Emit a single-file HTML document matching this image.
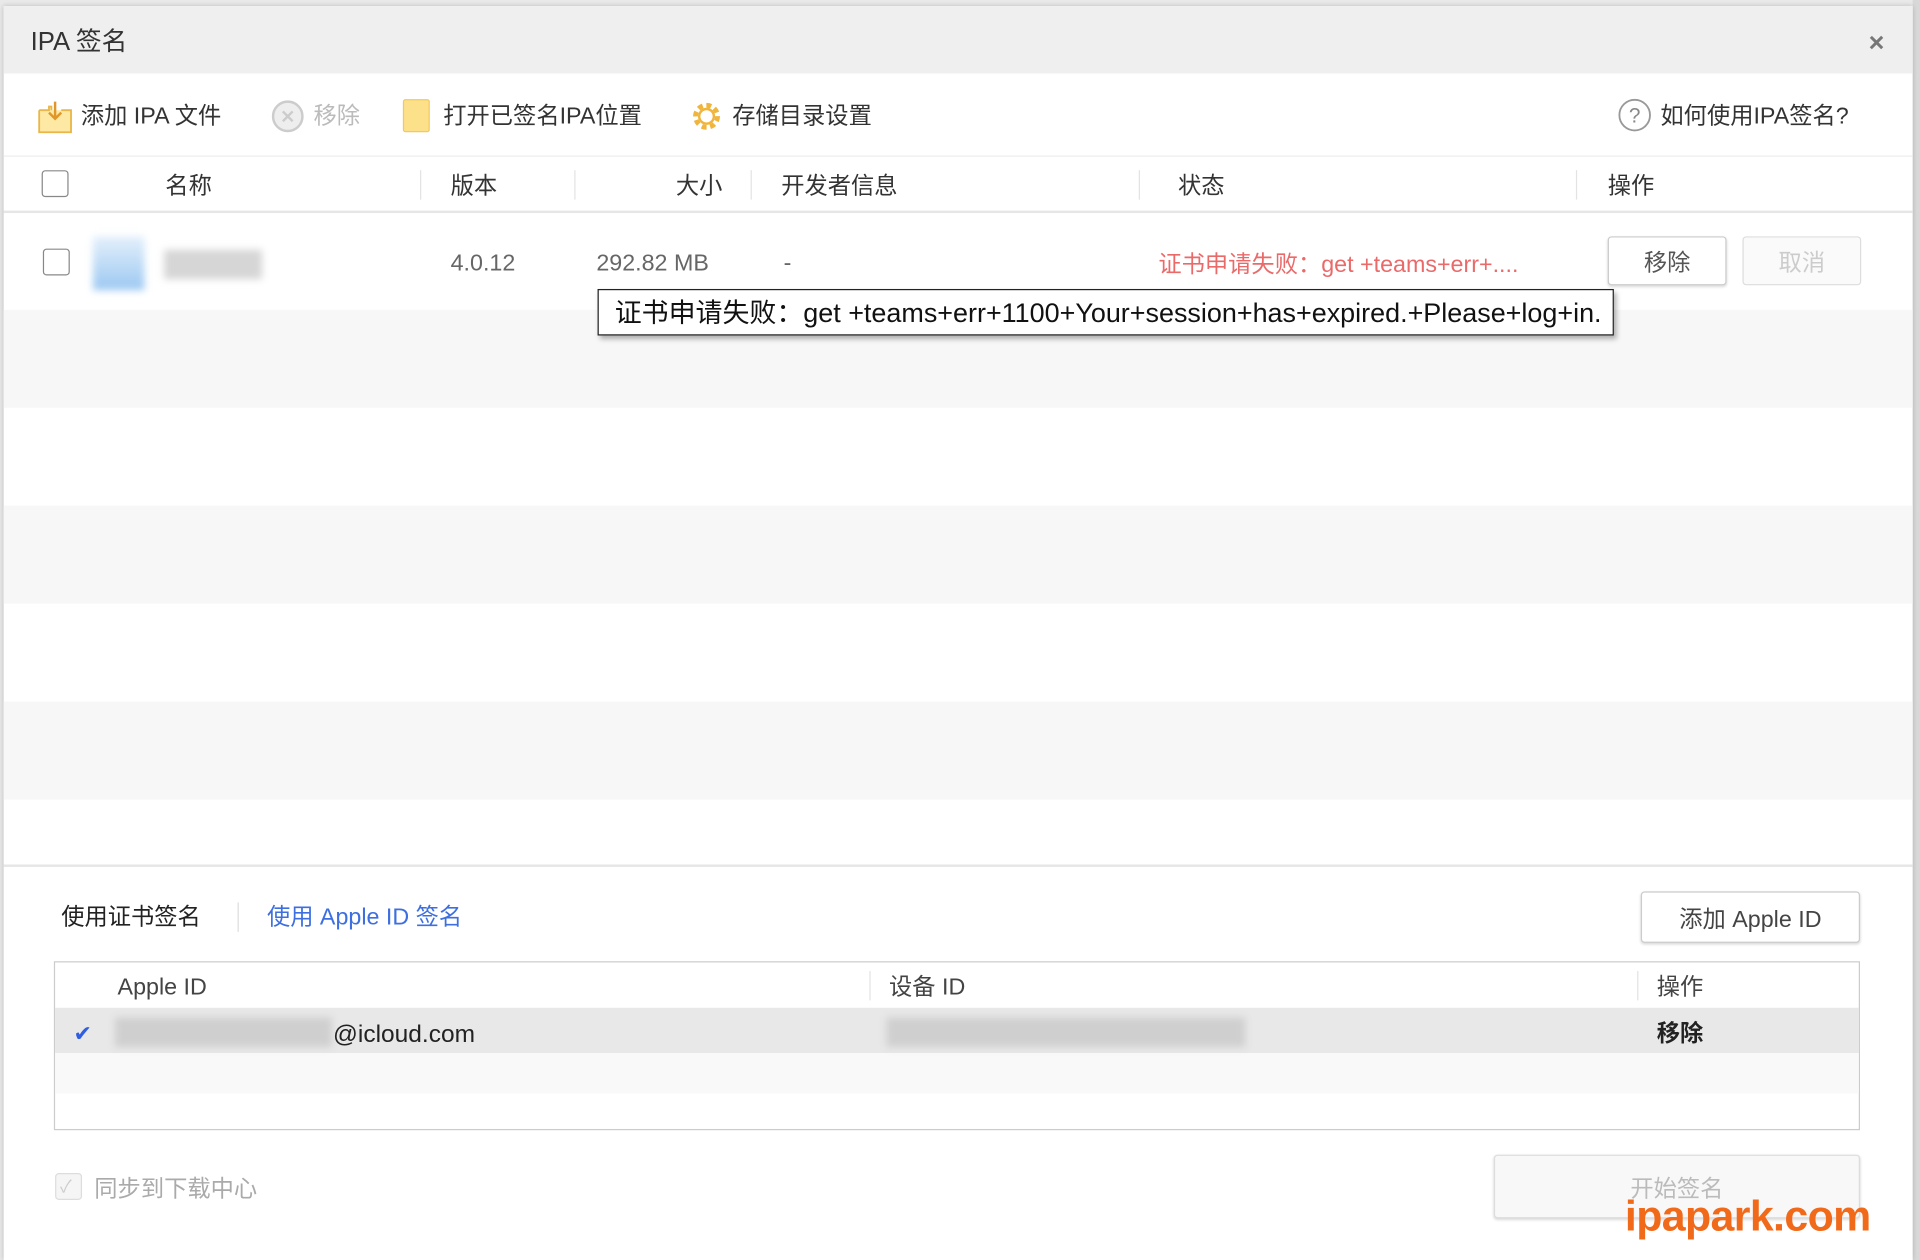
<!DOCTYPE html>
<html><head><meta charset="utf-8">
<style>
*{margin:0;padding:0;box-sizing:border-box}
html,body{width:1920px;height:1260px;overflow:hidden;background:#e9e9e9}
#w{position:absolute;left:0;top:0;width:1568px;height:1029px;transform:scale(1.22449);transform-origin:0 0;font-family:"Liberation Sans","Noto Sans CJK SC",sans-serif;color:#333}
.a{position:absolute}
.t{position:absolute;white-space:nowrap;line-height:1;margin-top:2px}
.dlg{left:3px;top:5px;width:1559px;height:1024px;background:#fff;box-shadow:0 0 4px rgba(0,0,0,.2)}
.cb{position:absolute;width:22px;height:22px;border:1.5px solid #888;border-radius:3px;background:#fff}
.sep{position:absolute;width:1px;background:#e3e3e3}
.btn{position:absolute;border:1px solid #ccc;border-radius:3px;background:#fff;box-shadow:0 1px 2px rgba(0,0,0,.15);display:flex;align-items:center;justify-content:center;font-size:19px}
</style></head><body><div id="w">
<div class="a" style="left:1562px;top:0;width:6px;height:1029px;background:#d8d8d8"></div>
<div class="a dlg"></div>
<div class="a" style="left:3px;top:5px;width:1559px;height:55px;background:#efefef"></div>
<div class="t" style="left:25px;top:22px;font-size:21px;color:#333">IPA 签名</div>
<div class="t" style="left:1526px;top:22px;font-size:22px;color:#777;font-weight:bold">×</div>

<svg class="a" style="left:30px;top:80px" width="30" height="30" viewBox="0 0 30 30"><path d="M2 10h8v-3h2v3M20 10h8v18H2V10" fill="#fde9a3" stroke="#e8b64a" stroke-width="1.5"/><path d="M15 3v14M10 12l5 5 5-5" fill="none" stroke="#e0962a" stroke-width="2"/></svg>
<div class="t" style="left:66px;top:84px;font-size:19px">添加 IPA 文件</div>
<svg class="a" style="left:221px;top:81px" width="28" height="28" viewBox="0 0 28 28"><circle cx="14" cy="14" r="12" fill="#eee" stroke="#ccc" stroke-width="2"/><path d="M10 10l8 8M18 10l-8 8" stroke="#ccc" stroke-width="2"/></svg>
<div class="t" style="left:256px;top:84px;font-size:19px;color:#bbb">移除</div>
<div class="a" style="left:329px;top:81px;width:22px;height:27px;background:#fde18a;border:1px solid #f2c95c;border-radius:2px"></div>
<div class="t" style="left:362px;top:84px;font-size:19px">打开已签名IPA位置</div>
<svg class="a" style="left:562px;top:80px" width="30" height="30" viewBox="0 0 30 30"><circle cx="15" cy="15" r="9" fill="none" stroke="#f0b53c" stroke-width="4" stroke-dasharray="4 3"/><circle cx="15" cy="15" r="6" fill="#fff" stroke="#f0b53c" stroke-width="2"/></svg>
<div class="t" style="left:598px;top:84px;font-size:19px">存储目录设置</div>
<svg class="a" style="left:1321px;top:80px" width="28" height="28" viewBox="0 0 28 28"><circle cx="14" cy="14" r="12.5" fill="none" stroke="#999" stroke-width="1.5"/><text x="14" y="20" font-size="17" text-anchor="middle" fill="#888" font-family="Liberation Sans">?</text></svg>
<div class="t" style="left:1356px;top:84px;font-size:19px">如何使用IPA签名?</div>

<div class="a" style="left:3px;top:127px;width:1559px;height:1px;background:#eee"></div>
<div class="a" style="left:3px;top:172px;width:1559px;height:2px;background:#e6e6e6"></div>
<div class="cb" style="left:34px;top:139px"></div>
<div class="t" style="left:135px;top:141px;font-size:19px">名称</div>
<div class="t" style="left:368px;top:141px;font-size:19px">版本</div>
<div class="t" style="left:552px;top:141px;font-size:19px">大小</div>
<div class="t" style="left:638px;top:141px;font-size:19px">开发者信息</div>
<div class="t" style="left:962px;top:141px;font-size:19px">状态</div>
<div class="t" style="left:1313px;top:141px;font-size:19px">操作</div>
<div class="sep" style="left:343px;top:139px;height:24px"></div>
<div class="sep" style="left:469px;top:139px;height:24px"></div>
<div class="sep" style="left:613px;top:139px;height:24px"></div>
<div class="sep" style="left:930px;top:139px;height:24px"></div>
<div class="sep" style="left:1287px;top:139px;height:24px"></div>

<div class="a" style="left:3px;top:253px;width:1559px;height:80px;background:#f7f7f7"></div>
<div class="a" style="left:3px;top:413px;width:1559px;height:80px;background:#f7f7f7"></div>
<div class="a" style="left:3px;top:573px;width:1559px;height:80px;background:#f7f7f7"></div>
<div class="a" style="left:3px;top:706px;width:1559px;height:2px;background:#e6e6e6"></div>
<div class="cb" style="left:35px;top:203px"></div>
<div class="a" style="left:76px;top:193px;width:42px;height:44px;background:linear-gradient(#e4f0fb,#9cc8f2);filter:blur(3px)"></div>
<div class="a" style="left:134px;top:204px;width:80px;height:24px;background:#d6d6d6;filter:blur(3px)"></div>
<div class="t" style="left:368px;top:204px;font-size:19px;color:#666">4.0.12</div>
<div class="t" style="left:487px;top:204px;font-size:19px;color:#666">292.82 MB</div>
<div class="t" style="left:640px;top:204px;font-size:19px;color:#666">-</div>
<div class="t" style="left:946px;top:205px;font-size:19px;color:#ea6a6a">证书申请失败：get +teams+err+....</div>
<div class="btn" style="left:1313px;top:193px;width:97px;height:40px;color:#555">移除</div>
<div class="btn" style="left:1423px;top:193px;width:97px;height:40px;color:#ccc;background:#fafafa;box-shadow:none;border-color:#ddd">取消</div>
<div class="a" style="left:488px;top:236px;width:830px;height:38px;background:#fff;border:1px solid #222;box-shadow:2px 3px 4px rgba(0,0,0,.3)"></div>
<div class="t" style="left:502px;top:243px;font-size:22px;color:#111">证书申请失败：get +teams+err+1100+Your+session+has+expired.+Please+log+in.</div>

<div class="t" style="left:50px;top:738px;font-size:19px;color:#222">使用证书签名</div>
<div class="sep" style="left:194px;top:737px;height:24px;background:#ddd"></div>
<div class="t" style="left:218px;top:738px;font-size:19px;color:#3d6fe0">使用 Apple ID 签名</div>
<div class="btn" style="left:1340px;top:728px;width:179px;height:42px;color:#444">添加 Apple ID</div>

<div class="a" style="left:44px;top:785px;width:1475px;height:138px;border:1.5px solid #ccc;background:#fff"></div>
<div class="t" style="left:96px;top:795px;font-size:19px;color:#444">Apple ID</div>
<div class="t" style="left:726px;top:795px;font-size:19px;color:#444">设备 ID</div>
<div class="t" style="left:1353px;top:795px;font-size:19px;color:#444">操作</div>
<div class="sep" style="left:710px;top:793px;height:24px"></div>
<div class="sep" style="left:1337px;top:793px;height:24px"></div>
<div class="a" style="left:45px;top:823px;width:1473px;height:37px;background:#e8e8e8"></div>
<div class="a" style="left:45px;top:860px;width:1473px;height:33px;background:#f9f9f9"></div>
<div class="t" style="left:60px;top:833px;font-size:18px;color:#2f5ee0">✔</div>
<div class="a" style="left:94px;top:831px;width:177px;height:24px;background:#cfcfcf;filter:blur(3px)"></div>
<div class="t" style="left:272px;top:833px;font-size:20px;color:#222">@icloud.com</div>
<div class="a" style="left:724px;top:831px;width:293px;height:24px;background:#cfcfcf;filter:blur(3px)"></div>
<div class="t" style="left:1353px;top:833px;font-size:19px;color:#222;font-weight:bold">移除</div>

<div class="cb" style="left:45px;top:958px;border-color:#ddd;background:#f5f5f5"></div>
<div class="t" style="left:49px;top:960px;font-size:14px;color:#ccc">✓</div>
<div class="t" style="left:77px;top:960px;font-size:19px;color:#aaa">同步到下载中心</div>
<div class="btn" style="left:1220px;top:943px;width:299px;height:52px;color:#bbb;background:#f8f8f8;border-color:#ddd">开始签名</div>
<div class="t" style="left:1327px;top:974px;font-size:35px;color:#f06a1a;font-weight:bold;letter-spacing:-0.5px">ipapark.com</div>
</div></body></html>
